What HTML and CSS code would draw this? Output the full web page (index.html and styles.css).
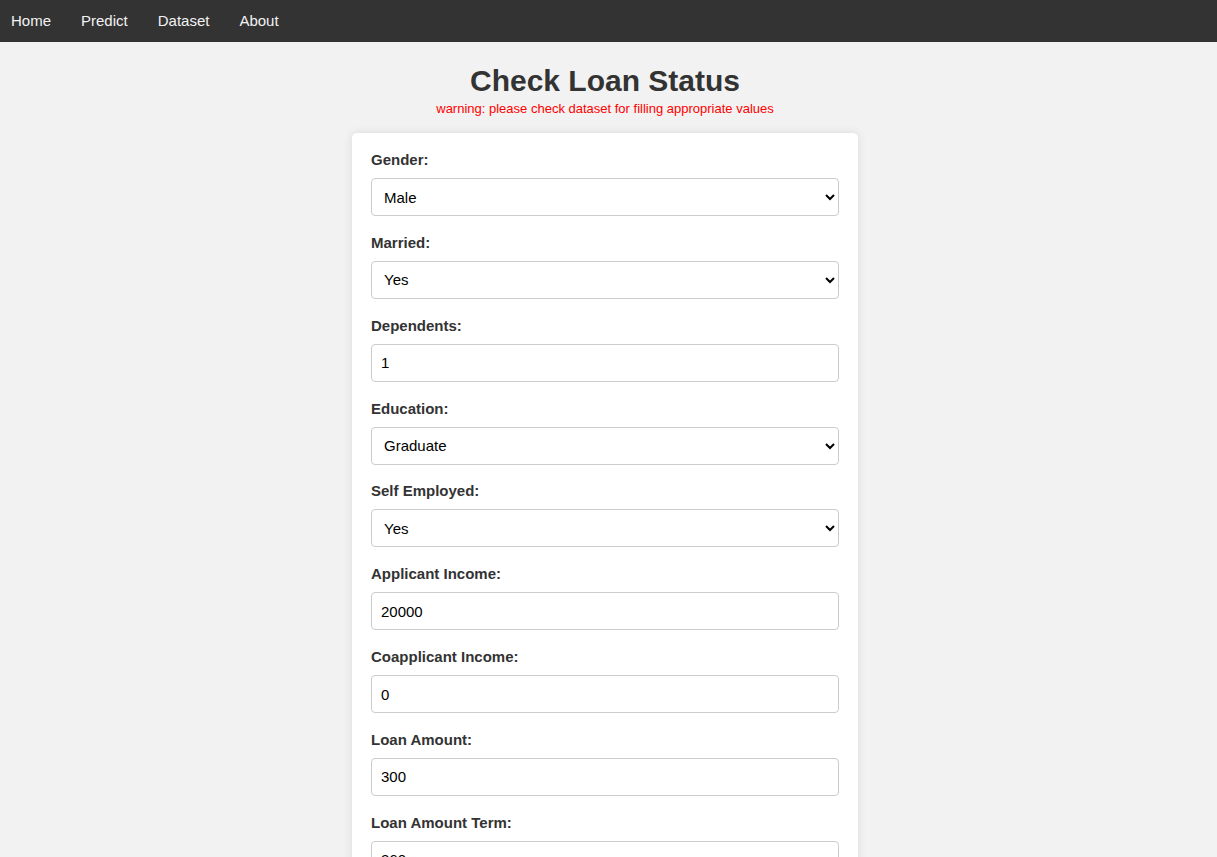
FILE: index.html
```html
<!DOCTYPE html>
<html lang="en">
<head>
<meta charset="UTF-8">
<title>Check Loan Status</title>
<link rel="stylesheet" href="styles.css">
</head>
<body>
<nav class="topnav">
  <a href="#">Home</a>
  <a href="#">Predict</a>
  <a href="#">Dataset</a>
  <a href="#">About</a>
</nav>
<main class="page">
  <h1 class="title">Check Loan Status</h1>
  <p class="warning">warning: please check dataset for filling appropriate values</p>
  <form class="card">
    <div class="field">
      <label for="gender">Gender:</label>
      <select id="gender" class="control select"><option>Male</option><option>Female</option></select>
    </div>
    <div class="field">
      <label for="married">Married:</label>
      <select id="married" class="control select"><option>Yes</option><option>No</option></select>
    </div>
    <div class="field">
      <label for="dependents">Dependents:</label>
      <input id="dependents" class="control" type="text" value="1">
    </div>
    <div class="field">
      <label for="education">Education:</label>
      <select id="education" class="control select"><option>Graduate</option><option>Not Graduate</option></select>
    </div>
    <div class="field">
      <label for="self">Self Employed:</label>
      <select id="self" class="control select"><option>Yes</option><option>No</option></select>
    </div>
    <div class="field">
      <label for="income">Applicant Income:</label>
      <input id="income" class="control" type="text" value="20000">
    </div>
    <div class="field">
      <label for="coincome">Coapplicant Income:</label>
      <input id="coincome" class="control" type="text" value="0">
    </div>
    <div class="field">
      <label for="amount">Loan Amount:</label>
      <input id="amount" class="control" type="text" value="300">
    </div>
    <div class="field">
      <label for="term">Loan Amount Term:</label>
      <input id="term" class="control" type="text" value="360">
    </div>
    <div class="field">
      <label for="credit">Credit History:</label>
      <select id="credit" class="control select"><option>1</option><option>0</option></select>
    </div>
    <div class="field">
      <label for="area">Property Area:</label>
      <select id="area" class="control select"><option>Urban</option><option>Semiurban</option><option>Rural</option></select>
    </div>
    <button type="submit" class="submit">Submit</button>
  </form>
</main>
</body>
</html>
```
FILE: styles.css
```css
* {
  box-sizing: border-box;
}

body {
  margin: 0;
  background: #f2f2f2;
  font-family: "Liberation Sans", Arial, sans-serif;
  color: #333;
}

.topnav {
  display: flex;
  gap: 10px;
  height: 42px;
  padding-left: 1px;
  background: #333;
}

.topnav a {
  display: block;
  padding: 0 10px;
  line-height: 42px;
  font-size: 15px;
  color: #f2f2f2;
  text-decoration: none;
}

.page {
  display: flex;
  flex-direction: column;
  align-items: center;
  padding: 22px 7px 40px 0;
}

.title {
  margin: 0;
  font-size: 30px;
  font-weight: bold;
  color: #333;
}

.warning {
  margin: 3px 0 17px;
  font-size: 13px;
  color: #ff0000;
}

.card {
  width: 506px;
  padding: 18px 19px 20px;
  background: #fff;
  border-radius: 5px;
  box-shadow: 0 0 10px rgba(0, 0, 0, 0.1);
}

.field {
  display: flex;
  flex-direction: column;
  margin-bottom: 17.85px;
}

.field label {
  font-size: 15px;
  line-height: 17px;
  font-weight: bold;
  color: #333;
  margin-bottom: 10px;
}

.control {
  height: 38px;
  width: 100%;
  padding: 0 9px;
  border: 1px solid #ccc;
  border-radius: 4px;
  font-family: "Liberation Sans", Arial, sans-serif;
  font-size: 15px;
  color: #000;
  background: #fff;
}

.select {
  padding: 0 8px;
}

.submit {
  width: 100%;
  padding: 10px;
  border: none;
  border-radius: 4px;
  background: #4caf50;
  color: #fff;
  font-size: 16px;
  font-family: "Liberation Sans", Arial, sans-serif;
}
```
